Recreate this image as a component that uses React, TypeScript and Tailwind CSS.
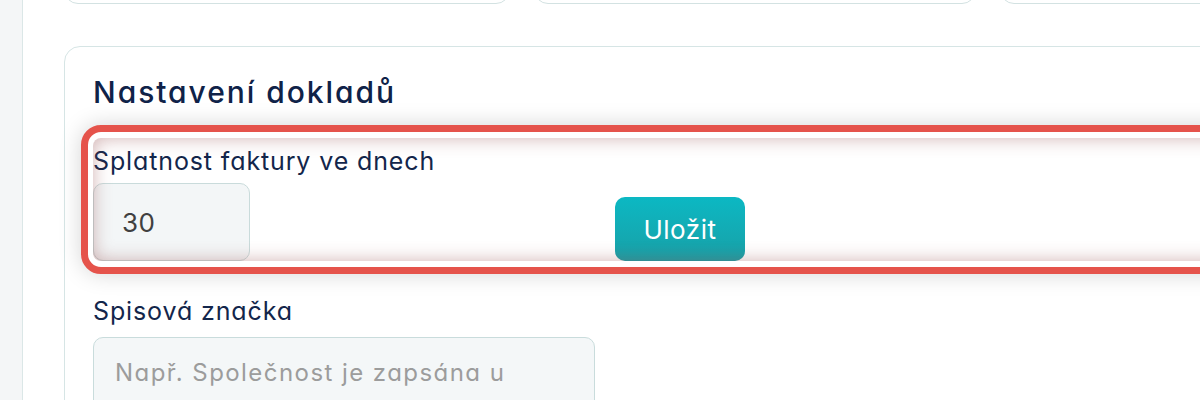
import React from "react";

export default function App() {
  return (
    <div className="flex h-[400px] w-[1200px] overflow-hidden bg-white font-['Inter',sans-serif] [font-feature-settings:'cv11']">
      <aside className="w-[23px] shrink-0 border-r border-[#dbe7e7] bg-[#f4f6f7]" />
      <main className="flex min-w-0 flex-1 flex-col pl-[41px]">
        <div className="-mt-[60px] flex shrink-0 gap-[24px]">
          <div className="h-[64px] w-[446px] shrink-0 rounded-[14px] border border-[#d3e2e2] bg-white" />
          <div className="h-[64px] w-[442px] shrink-0 rounded-[14px] border border-[#d3e2e2] bg-white" />
          <div className="h-[64px] w-[442px] shrink-0 rounded-[14px] border border-[#d3e2e2] bg-white" />
        </div>

        <section className="mt-[42px] w-[1200px] shrink-0 rounded-[16px] border border-[#d6e5e5] bg-white pl-[28px] pt-[27px]">
          <h2 className="text-[30px] font-medium leading-[36px] tracking-[0.065em] text-[#0f2248]">
            Nastavení dokladů
          </h2>

          <div className="-ml-[12px] mt-[15px] rounded-[20px] border-[7px] border-[#e5534b] bg-white px-[5px] pb-[6px] pt-[6px] shadow-[0_0_22px_rgba(0,0,0,0.17)]">
            <div className="relative rounded-[8px] pt-[7px]">
              <label className="block text-[25px] leading-[32px] tracking-[0.035em] text-[#13264b]">
                Splatnost faktury ve dnech
              </label>
              <div className="mt-[6px] flex items-end">
                <div className="flex h-[78px] w-[157px] items-center rounded-[10px] border border-[#c9dbdb] bg-[#f3f6f7] pl-[28px] text-[26px] tracking-[0.02em] text-[#404040]">
                  30
                </div>
                <button className="ml-[365px] flex h-[64px] w-[130px] items-center justify-center rounded-[10px] bg-gradient-to-b from-[#0bb8c3] to-[#17a0a7] text-[26px] font-normal tracking-[0.02em] text-white">
                  Uložit
                </button>
              </div>
              <div className="pointer-events-none absolute inset-0 rounded-[8px] shadow-[inset_0_0_18px_rgba(150,80,80,0.45)]" />
            </div>
          </div>

          <label className="mt-[21px] block text-[25px] leading-[32px] tracking-[0.035em] text-[#13264b]">
            Spisová značka
          </label>
          <div className="mt-[10px] h-[120px] w-[502px] rounded-[10px] border border-[#c9dcdc] bg-[#f4f7f8] pl-[21px] pt-[15px] text-[24px] leading-[39px] tracking-[0.06em] text-[#9c9c9c]">
            <span className="block">Např. Společnost je zapsána u</span>
            <span className="block">soudu v Plzni, oddíl C, vložka 12345</span>
          </div>
        </section>
      </main>
    </div>
  );
}
